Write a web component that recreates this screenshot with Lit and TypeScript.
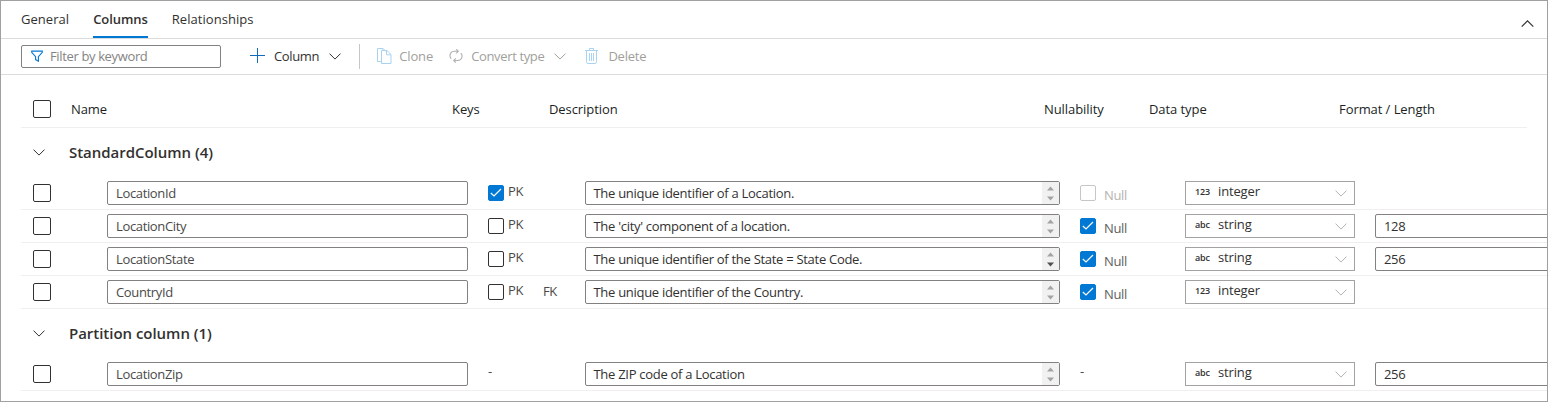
import { LitElement, html, css, nothing } from "lit";
import { customElement } from "lit/decorators.js";
import { classMap } from "lit/directives/class-map.js";

interface Row {
  name: string;
  description: string;
  type: "integer" | "string";
  pk?: boolean;
  fk?: boolean;
  nullable?: boolean;
  nullLocked?: boolean;
  length?: string;
  partition?: boolean;
  overflow?: boolean;
}

const GROUPS: { title: string; rows: Row[] }[] = [
  {
    title: "StandardColumn (4)",
    rows: [
      { name: "LocationId", description: "The unique identifier of a Location.", type: "integer", pk: true, nullLocked: true },
      { name: "LocationCity", description: "The 'city' component of a location.", type: "string", nullable: true, length: "128" },
      { name: "LocationState", description: "The unique identifier of the State = State Code.", type: "string", nullable: true, length: "256", overflow: true },
      { name: "CountryId", description: "The unique identifier of the Country.", type: "integer", nullable: true, fk: true },
    ],
  },
  {
    title: "Partition column (1)",
    rows: [{ name: "LocationZip", description: "The ZIP code of a Location", type: "string", length: "256", partition: true }],
  },
];

const chevron = html`<svg class="chev" width="12" height="7" viewBox="0 0 12 7"><path d="M.5 .6 6 6.1 11.5 .6" /></svg>`;
const tick = html`<svg width="16" height="16" viewBox="0 0 16 16"><path d="M2.8 8 6 11 13 4" fill="none" stroke="#fff" stroke-width="1.2"/></svg>`;

@customElement("app-root")
export class AppRoot extends LitElement {
  static styles = css`
    :host { display: block; font-family: "Open Sans", "Noto Sans", sans-serif; font-size: 13px; color: #323130; }
    * { box-sizing: border-box; }
    svg { display: block; flex: none; fill: none; }
    .panel { width: 1548px; height: 402px; border: 1px solid #a09fa2; background: #fff; overflow: hidden; white-space: nowrap; }
    .tabs { height: 38px; border-bottom: 1px solid #dcdcdc; display: flex; padding: 0 13px 0 20px; gap: 24px; }
    .tab { height: 37px; line-height: 37px; letter-spacing: 0.05px; }
    .tab.active { font-weight: 600; border-bottom: 2px solid #0078d4; letter-spacing: -0.07px; }
    .collapse { margin: 19px 0 0 auto; }
    .chev { stroke: #323130; stroke-width: 1; }
    .up { transform: rotate(180deg); stroke: #323130; stroke-width: 1.2; }
    .tools { height: 36px; border-bottom: 1px solid #dcdcdc; display: flex; align-items: center; padding: 0 0 1px 20px; line-height: 20px; letter-spacing: -0.36px; }
    .filter { width: 200px; height: 23px; border: 1px solid #828180; border-radius: 2px; display: flex; align-items: center; padding-left: 9px; gap: 7px; color: #858483; }
    .cmd { display: flex; align-items: center; }
    .add { margin-left: 29px; gap: 8px; }
    .add .chev { margin-left: 2px; }
    .rule { width: 1px; height: 25px; background: #c8c6c4; margin: 0 17px 0 18px; }
    .off { color: #a19f9d; gap: 8px; }
    .clone { gap: 7px; letter-spacing: -0.1px; }
    .off .chev { stroke: #a19f9d; margin-left: 2px; }
    .convert { margin-left: 16px; }
    .delete { margin-left: 19px; gap: 10px; letter-spacing: -0.24px; }
    .grid { padding-left: 20px; }
    .head { display: grid; grid-template-columns: 50px 381px 97px 495px 105px 190px 1fr; height: 53px; padding: 16px 0 0; width: 1506px; border-bottom: 1px solid #f0efee; align-items: center; line-height: 20px; color: #201f1e; letter-spacing: -0.07px; font-weight: 500; }
    .box { width: 18px; height: 18px; border: 1px solid #323130; border-radius: 2px; margin-left: 12px; background: #fff; }
    .group { height: 49px; display: flex; align-items: center; padding: 0 0 2px 12px; gap: 24px; font-size: 15px; font-weight: 600; color: #323130; letter-spacing: -0.03px; }
    .group .chev { margin-top: 1px; }
    .row { display: grid; grid-template-columns: 86px 381px 97px 495px 105px 190px 1fr; height: 33px; padding-top: 4px; border-bottom: 1px solid #f0efee; color: #4a4948; letter-spacing: -0.35px; }
    .row .box { margin-top: 3px; }
    .field { height: 24px; border: 1px solid #828180; border-radius: 2px; padding-left: 8px; line-height: 23px; }
    .name { width: 361px; }
    .desc { width: 475px; display: flex; justify-content: space-between; padding-left: 7.5px; color: #323130; letter-spacing: -0.29px; }
    .scroll { width: 17px; height: 22px; background: #f1f1f1; }
    .len { margin-right: -20px; color: #323130; }
    .cell { display: flex; align-items: flex-start; }
    .small { width: 16px; height: 16px; border: 1px solid #323130; border-radius: 2px; margin-top: 4px; flex: none; }
    .small svg { margin: -1px; }
    .small.on { background: #0078d4; border-color: #0078d4; }
    .small.locked { border-color: #c8c6c4; }
    .pk { line-height: 20px; margin: 0 0 0 4px; width: 35px; }
    .fk { line-height: 20px; margin-top: 1px; }
    .null { line-height: 20px; margin: 4px 0 0 8px; color: #605e5c; }
    .null.locked { color: #b5b3b1; }
    .dash { line-height: 18px; }
    .select { width: 170px; height: 24px; border: 1px solid #a3a2a1; display: flex; padding-left: 9px; line-height: 19px; color: #323130; letter-spacing: -0.15px; }
    .kind { width: 23px; font-size: 9px; font-weight: 600; }
    .select .chev { stroke: #b5b3b1; margin: 8px 7px 0 auto; }
  `;

  private row(r: Row) {
    return html`<div class="row">
      <span class="box"></span>
      <div class="field name">${r.name}</div>
      <div class="cell">
        ${r.partition
          ? html`<span class="dash">-</span>`
          : html`<span class=${classMap({ small: true, on: !!r.pk })}>${r.pk ? tick : nothing}</span><span class="pk">PK</span>${r.fk ? html`<span class="fk">FK</span>` : nothing}`}
      </div>
      <div class="field desc">
        <span>${r.description}</span>
        <svg class="scroll" width="17" height="22" viewBox="0 0 17 22">
          <path d="M5 8.5h7L8.5 4.5z" fill="#a3a3a3" /><path d="M5 14.5h7L8.5 18.5z" fill=${r.overflow ? "#505050" : "#a3a3a3"} />
        </svg>
      </div>
      <div class="cell">
        ${r.partition
          ? html`<span class="dash">-</span>`
          : html`<span class=${classMap({ small: true, on: !!r.nullable, locked: !!r.nullLocked })}>${r.nullable ? tick : nothing}</span><span class=${classMap({ null: true, locked: !!r.nullLocked })}>Null</span>`}
      </div>
      <div class="select"><span class="kind">${r.type === "integer" ? "123" : "abc"}</span><span>${r.type}</span>${chevron}</div>
      ${r.length ? html`<div class="field len">${r.length}</div>` : nothing}
    </div>`;
  }

  render() {
    return html`<div class="panel">
      <div class="tabs">
        <span class="tab">General</span><span class="tab active">Columns</span><span class="tab">Relationships</span>
        <svg class="collapse up" width="13" height="8" viewBox="0 0 13 8"><path d="M.7 1.3 6.5 7.1 12.3 1.3" /></svg>
      </div>
      <div class="tools">
        <div class="filter">
          <svg width="12" height="12" viewBox="0 0 12 12"><path d="M.7 1.1h10.6v1.2L7.4 6.6v4.6L4.6 9.6v-3L.7 2.3z" stroke="#0078d4" stroke-width="1.1" /></svg>
          <span>Filter by keyword</span>
        </div>
        <div class="cmd add">
          <svg width="16" height="16" viewBox="0 0 16 16"><path d="M0 7.5h15M7.5 0v15" stroke="#0f6cbd" /></svg>
          <span>Column</span>${chevron}
        </div>
        <span class="rule"></span>
        <div class="cmd off clone">
          <svg width="15" height="16" viewBox="0 0 15 16"><path d="M4.5 13.5H.5V.5h5.6l3 3M4.5 2.5h5.4l4.1 4v9H4.5zM9.5 2.8v4h4.2M6 .8v1.7" stroke="#a9d3f2" /></svg>
          <span>Clone</span>
        </div>
        <div class="cmd off convert">
          <svg width="14" height="14" viewBox="0 0 14 14"><path d="M5 11.5h3.8a4.3 4.3 0 0 0 3-7.3M9 2.3H5.2a4.3 4.3 0 0 0-3 7.3M7.2 .2 9.3 2.3 7.2 4.4M6.8 9.4 4.7 11.5l2.1 2.1" stroke="#b3b1af" stroke-width="1.1" /></svg>
          <span>Convert type</span>${chevron}
        </div>
        <div class="cmd off delete">
          <svg width="13" height="16" viewBox="0 0 13 16"><path d="M0 2.5h13M4.5 2.5v-2h4v2M1.5 2.5v11.2q0 1.8 1.4 1.8h7.2q1.4 0 1.4-1.8V2.5M4.5 5v8M6.5 5v8M8.5 5v8" stroke="#a9d3f2" /></svg>
          <span>Delete</span>
        </div>
      </div>
      <div class="grid">
        <div class="head">
          <span class="box"></span><span>Name</span><span>Keys</span><span>Description</span><span>Nullability</span><span>Data type</span><span>Format / Length</span>
        </div>
        ${GROUPS.map((g) => html`<div class="group">${chevron}<span>${g.title}</span></div>${g.rows.map((r) => this.row(r))}`)}
      </div>
    </div>`;
  }
}
